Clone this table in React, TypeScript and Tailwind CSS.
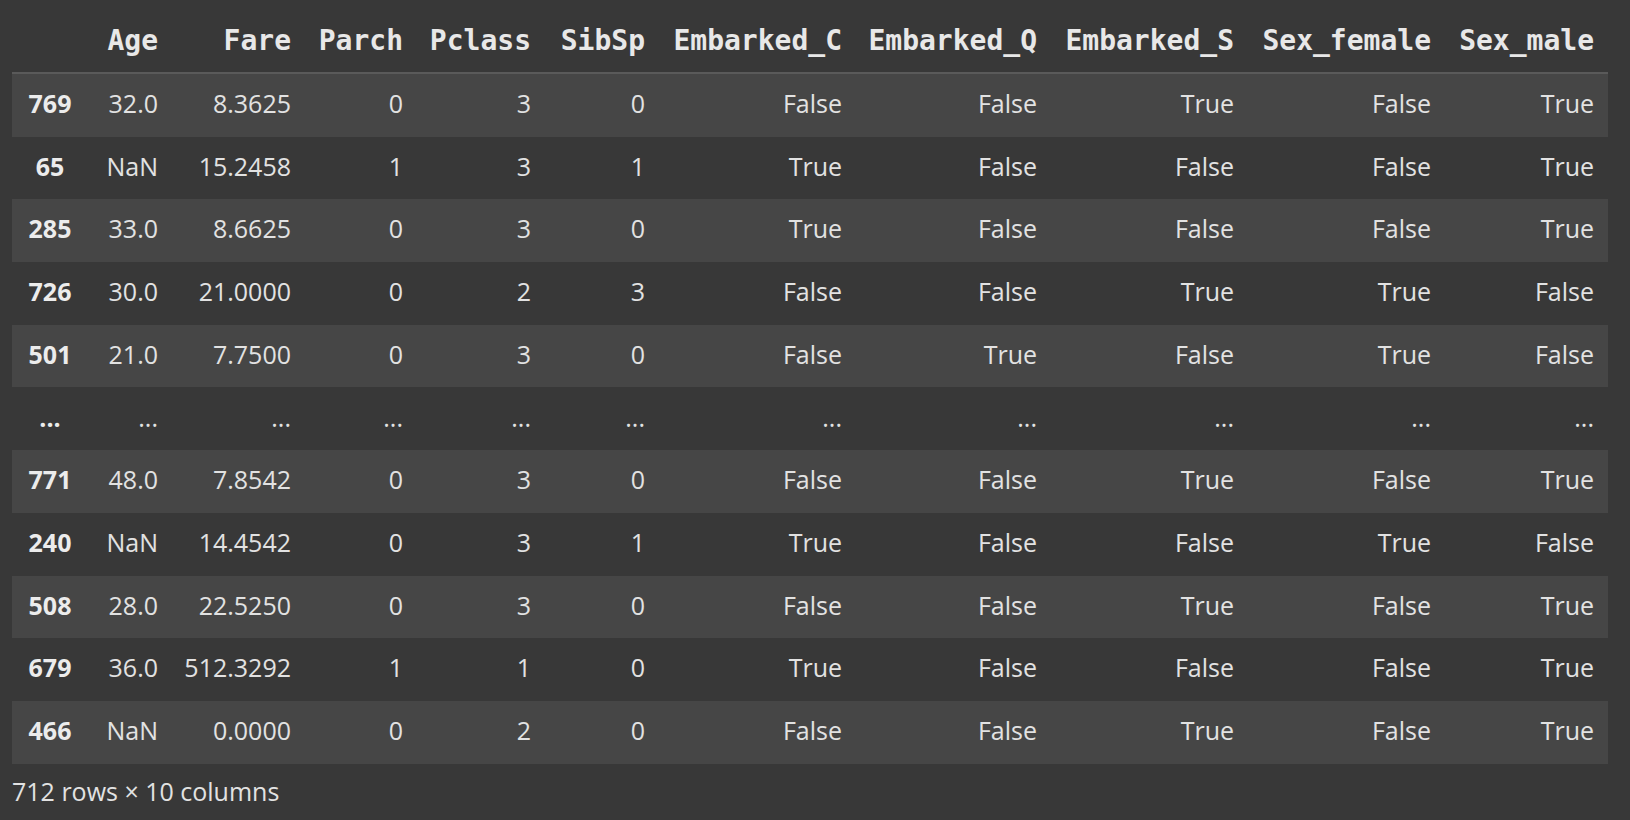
import React from "react";

const headers = ["Age", "Fare", "Parch", "Pclass", "SibSp", "Embarked_C", "Embarked_Q", "Embarked_S", "Sex_female", "Sex_male"];

const rows: string[][] = [
  ["769", "32.0", "8.3625", "0", "3", "0", "False", "False", "True", "False", "True"],
  ["65", "NaN", "15.2458", "1", "3", "1", "True", "False", "False", "False", "True"],
  ["285", "33.0", "8.6625", "0", "3", "0", "True", "False", "False", "False", "True"],
  ["726", "30.0", "21.0000", "0", "2", "3", "False", "False", "True", "True", "False"],
  ["501", "21.0", "7.7500", "0", "3", "0", "False", "True", "False", "True", "False"],
  ["...", "...", "...", "...", "...", "...", "...", "...", "...", "...", "..."],
  ["771", "48.0", "7.8542", "0", "3", "0", "False", "False", "True", "False", "True"],
  ["240", "NaN", "14.4542", "0", "3", "1", "True", "False", "False", "True", "False"],
  ["508", "28.0", "22.5250", "0", "3", "0", "False", "False", "True", "False", "True"],
  ["679", "36.0", "512.3292", "1", "1", "0", "True", "False", "False", "False", "True"],
  ["466", "NaN", "0.0000", "0", "2", "0", "False", "False", "True", "False", "True"],
];

const gridCols =
  "grid grid-cols-[76px_84px_133px_112px_128px_114px_197px_195px_197px_197px_163px]";

export default function App() {
  return (
    <div className="min-h-[820px] w-[1630px] bg-[#383838] px-[12px]">
      <div className="w-[1596px]">
        <div
          className={`${gridCols} h-[74px] border-b-2 border-[#5a5a5a] text-[#e8e8e8] font-bold text-[28px] leading-none`}
          style={{ fontFamily: '"DejaVu Sans Mono", "Liberation Mono", monospace' }}
        >
          <div />
          {headers.map((h) => (
            <div key={h} className="flex items-end justify-end pr-[14px] pb-[17px]">
              {h}
            </div>
          ))}
        </div>
        {rows.map((r, i) => (
          <div
            key={i}
            className={`${gridCols} h-[62.7px] ${i % 2 === 0 ? "bg-[#464646]" : "bg-[#383838]"} text-[25px] text-[#e2e2e2]`}
            style={{ fontFamily: '"Open Sans", "Noto Sans", sans-serif' }}
          >
            {r.map((c, j) =>
              j === 0 ? (
                <div key={j} className="flex items-center justify-center pb-[3px] font-bold text-[#ececec]">
                  {c}
                </div>
              ) : (
                <div key={j} className="flex items-center justify-end pr-[14px] pb-[3px]">
                  {c}
                </div>
              )
            )}
          </div>
        ))}
        <div
          className="pt-[8px] text-[25px] leading-[39px] text-[#e2e2e2]"
          style={{ fontFamily: '"Open Sans", "Noto Sans", sans-serif' }}
        >
          712 rows × 10 columns
        </div>
      </div>
    </div>
  );
}
